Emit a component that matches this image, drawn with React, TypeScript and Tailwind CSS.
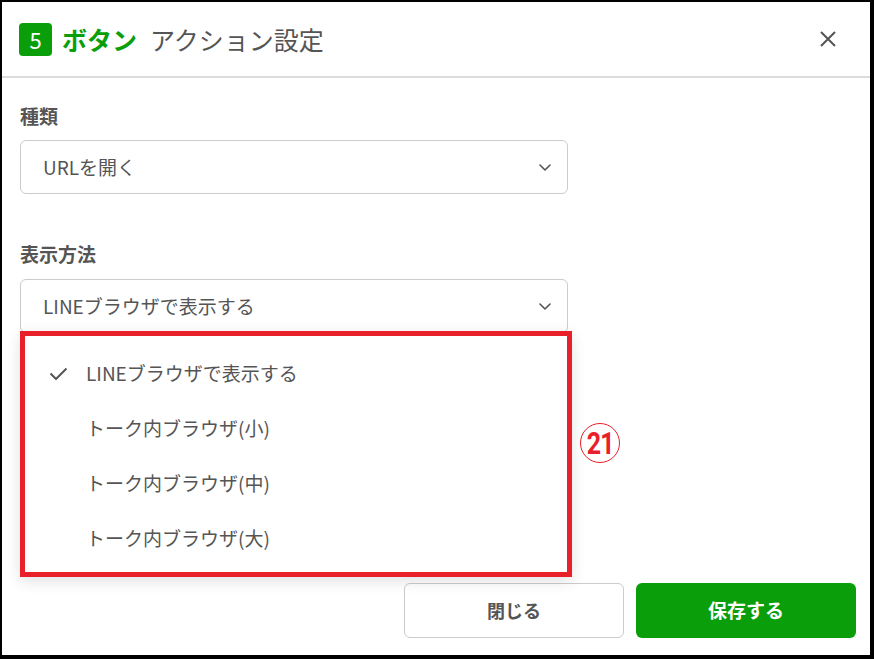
import React from "react";

const font = { fontFamily: '"Noto Sans CJK JP", "Noto Sans", sans-serif' };

function Chevron() {
  return (
    <svg width="12" height="7" viewBox="0 0 12 7" fill="none">
      <path d="M1 1l5 5 5-5" stroke="#555" strokeWidth="1.6" strokeLinecap="round" strokeLinejoin="round" />
    </svg>
  );
}

function Select({ value }: { value: string }) {
  return (
    <div className="w-[548px] h-[54px] rounded-[6px] border border-[#cccccc] bg-white flex items-center justify-between pl-[22px] pr-[16px]">
      <span className="text-[19px] text-[#555]">{value}</span>
      <Chevron />
    </div>
  );
}

export default function App() {
  const items = ["LINEブラウザで表示する", "トーク内ブラウザ(小)", "トーク内ブラウザ(中)", "トーク内ブラウザ(大)"];
  return (
    <div className="w-[874px] h-[659px] bg-black pt-[2px] pl-[2px] pr-[4px] pb-[4px]" style={font}>
      <div className="relative w-full h-full bg-white flex flex-col">
        {/* header */}
        <div className="h-[76px] border-b-2 border-[#dcdcdc] flex items-center pl-[17px] pr-[34px]">
          <div className="w-[33px] h-[33px] rounded-[4px] bg-[#0a9e0a] flex items-center justify-center text-white text-[22px] leading-none">
            5
          </div>
          <span className="ml-[10px] text-[25px] font-bold text-[#0a9e0a] leading-none">ボタン</span>
          <span className="ml-[13px] text-[25px] text-[#555] leading-none">アクション設定</span>
          <div className="flex-1" />
          <svg width="16" height="16" viewBox="0 0 16 16">
            <path d="M1 1L15 15M15 1L1 15" stroke="#555" strokeWidth="2" />
          </svg>
        </div>

        {/* body */}
        <div className="flex-1 pl-[18px] pt-[25px]">
          <div className="text-[19px] leading-[26px] font-bold text-[#555]">種類</div>
          <div className="mt-[11px]">
            <Select value="URLを開く" />
          </div>
          <div className="mt-[47px] text-[19px] leading-[26px] font-bold text-[#555]">表示方法</div>
          <div className="mt-[12px] relative">
            <Select value="LINEブラウザで表示する" />
            <div className="absolute left-0 top-[52px] w-[552px] border-[5px] border-[#e8202a] bg-white shadow-[0_4px_14px_rgba(0,0,0,0.12)] pt-[10px] pb-[6px] z-10">
              {items.map((t, i) => (
                <div key={t} className="h-[55px] flex items-center">
                  <div className="w-[61px] flex justify-end pr-[18px]">
                    {i === 0 && (
                      <svg width="19" height="13" viewBox="0 0 19 13" fill="none">
                        <path d="M1.5 6.5l5.5 5.5L17.5 1.5" stroke="#555" strokeWidth="2" />
                      </svg>
                    )}
                  </div>
                  <span className="text-[19px] text-[#555]">{t}</span>
                </div>
              ))}
            </div>
            <div className="absolute left-[560px] top-[144px] w-[40px] h-[40px] rounded-full border-[1.5px] border-[#e8202a] flex items-center justify-center">
              <span
                className="text-[#e8202a] text-[32px] font-bold leading-none tracking-[-1px] scale-x-[0.78] inline-block"
                style={{ fontFamily: '"Roboto", "Liberation Sans", sans-serif' }}
              >
                21
              </span>
            </div>
          </div>
        </div>

        {/* footer */}
        <div className="flex justify-end gap-[12px] pr-[14px] pb-[17px]">
          <button className="w-[220px] h-[55px] rounded-[6px] border border-[#cccccc] bg-white text-[18px] font-bold text-[#555]">
            閉じる
          </button>
          <button className="w-[220px] h-[55px] rounded-[6px] bg-[#0a9e0a] text-[19px] font-bold text-white">
            保存する
          </button>
        </div>
      </div>
    </div>
  );
}
